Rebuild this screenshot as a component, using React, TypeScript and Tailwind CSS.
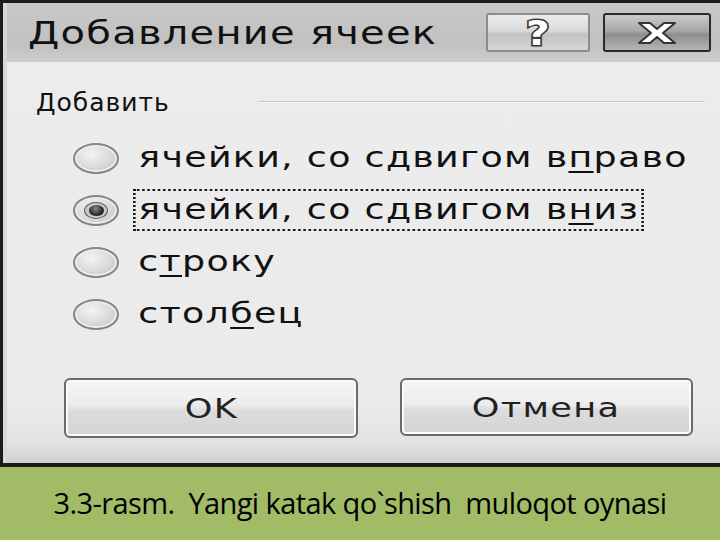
import React from 'react';

const dlgFont = { fontFamily: '"DejaVu Sans", Verdana, sans-serif' };

interface RadioRowProps {
  before: string;
  mnemonic: string;
  after: string;
  checked?: boolean;
  focused?: boolean;
}

function RadioRow({ before, mnemonic, after, checked, focused }: RadioRowProps) {
  return (
    <div className="h-[52px] flex items-center">
      <div className="w-[46px] h-[31px] shrink-0 rounded-[50%] border-2 border-[#858585] bg-[radial-gradient(ellipse_at_40%_35%,#f4f4f4_0%,#d8d8d8_55%,#b8b8b8_100%)] flex items-center justify-center shadow-[inset_0_0_0_2px_#ededed]">
        {checked && (
          <div className="w-[24px] h-[17px] rounded-[50%] border border-[#5e5e5e] bg-[#c8c8c8] flex items-center justify-center">
            <div className="w-[15px] h-[11px] rounded-[50%] bg-[radial-gradient(circle_at_45%_35%,#8a8a8a_0%,#2a2a2a_60%,#111_100%)]" />
          </div>
        )}
      </div>
      <div
        className={
          focused
            ? 'ml-[14px] h-[42px] flex items-center px-[2px] border-2 border-dotted border-[#1a1a1a] origin-left scale-x-[1.3]'
            : 'ml-[14px] h-[42px] flex items-center px-[2px] border-2 border-transparent origin-left scale-x-[1.3]'
        }
      >
        <span className="text-[28px] leading-none text-[#111] tracking-[1px] whitespace-nowrap" style={dlgFont}>
          {before}
          <span className="underline underline-offset-[4px] decoration-2">{mnemonic}</span>
          {after}
        </span>
      </div>
    </div>
  );
}

export default function App() {
  return (
    <div className="w-[720px] h-[540px] flex flex-col overflow-hidden bg-[#ebebeb]">
      <div className="h-[467px] flex flex-col border-t-[3px] border-l-[3px] border-b-4 border-[#1b1b1b] bg-[#ebebeb]">
        {/* title bar */}
        <div className="h-[59px] shrink-0 flex items-center pl-[21px] pr-[9px] bg-[linear-gradient(#c8c8c8,#c1c1c1_70%,#cecece)] border-l-[4px] border-[#d6d6d6]">
          <span
            className="inline-block origin-left scale-x-[1.25] text-[32px] leading-none text-[#111] tracking-[1px] whitespace-nowrap"
            style={dlgFont}
          >
            Добавление ячеек
          </span>
          <div className="ml-auto flex items-center gap-[13px]">
            <div className="w-[104px] h-[39px] rounded-[3px] border-2 border-[#8c8c8c] bg-[linear-gradient(#ececec,#dadada_45%,#c2c2c2_55%,#d6d6d6)] flex items-center justify-center">
              <span
                className="inline-block scale-x-[1.2] text-[34px] leading-none font-bold text-white [-webkit-text-stroke:3px_#3a3a3a] [paint-order:stroke_fill]"
                style={dlgFont}
              >
                ?
              </span>
            </div>
            <div className="w-[108px] h-[39px] rounded-[3px] border-2 border-[#2a2a2a] bg-[linear-gradient(#cacaca,#a8a8a8_45%,#8e8e8e_55%,#b4b4b4)] flex items-center justify-center">
              <svg width="40" height="24" viewBox="0 0 40 24">
                <path
                  d="M2 2 H13 L20 8 L27 2 H38 L26 12 L38 22 H27 L20 16 L13 22 H2 L14 12 Z"
                  fill="#fff"
                  stroke="#333"
                  strokeWidth="2"
                  strokeLinejoin="round"
                />
              </svg>
            </div>
          </div>
        </div>

        {/* body */}
        <div className="flex-1 flex flex-col pt-[20px] border-l-[4px] border-[#d8d8d8] bg-[linear-gradient(#ececec_0%,#ebebeb_85%,#e2e2e2_95%,#cfcfcf_100%)]">
          <div className="h-[40px] flex items-center pl-[29px] pr-[15px]">
            <span className="text-[25px] leading-none text-[#111] tracking-[1px] whitespace-nowrap" style={dlgFont}>
              Добавить
            </span>
            <div className="flex-1 ml-[88px] h-[2px] bg-[#c8c8c8] border-b border-[#f6f6f6]" />
          </div>

          <div className="mt-[10px] pl-[66px] flex flex-col">
            <RadioRow before="ячейки, со сдвигом в" mnemonic="п" after="раво" />
            <RadioRow before="ячейки, со сдвигом в" mnemonic="н" after="из" checked focused />
            <RadioRow before="с" mnemonic="т" after="року" />
            <RadioRow before="стол" mnemonic="б" after="ец" />
          </div>

          <div className="mt-[38px] flex pl-[57px] gap-[42px]">
            <button className="w-[294px] h-[60px] rounded-[6px] border-2 border-[#6a6a6a] bg-[linear-gradient(#f6f6f6,#ececec_45%,#dcdcdc_55%,#d4d4d4)] shadow-[inset_0_0_0_2px_#fbfbfb] flex items-center justify-center">
              <span className="inline-block scale-x-[1.3] text-[27px] leading-none text-[#222] tracking-[1px]" style={dlgFont}>
                OK
              </span>
            </button>
            <button className="w-[293px] h-[58px] rounded-[6px] border-2 border-[#6a6a6a] bg-[linear-gradient(#f6f6f6,#ececec_45%,#dcdcdc_55%,#d4d4d4)] shadow-[inset_0_0_0_2px_#fbfbfb] flex items-center justify-center">
              <span className="inline-block scale-x-[1.3] text-[27px] leading-none text-[#222] tracking-[1px]" style={dlgFont}>
                Отмена
              </span>
            </button>
          </div>
        </div>
      </div>

      {/* caption */}
      <div className="flex-1 bg-[#a1bb66] flex items-center justify-center pb-[2px]">
        <span
          className="text-[29px] leading-none text-black tracking-[-0.6px] whitespace-pre"
          style={{ fontFamily: '"Open Sans", "Noto Sans", sans-serif' }}
        >
          3.3-rasm.  Yangi katak qo`shish  muloqot oynasi
        </span>
      </div>
    </div>
  );
}
